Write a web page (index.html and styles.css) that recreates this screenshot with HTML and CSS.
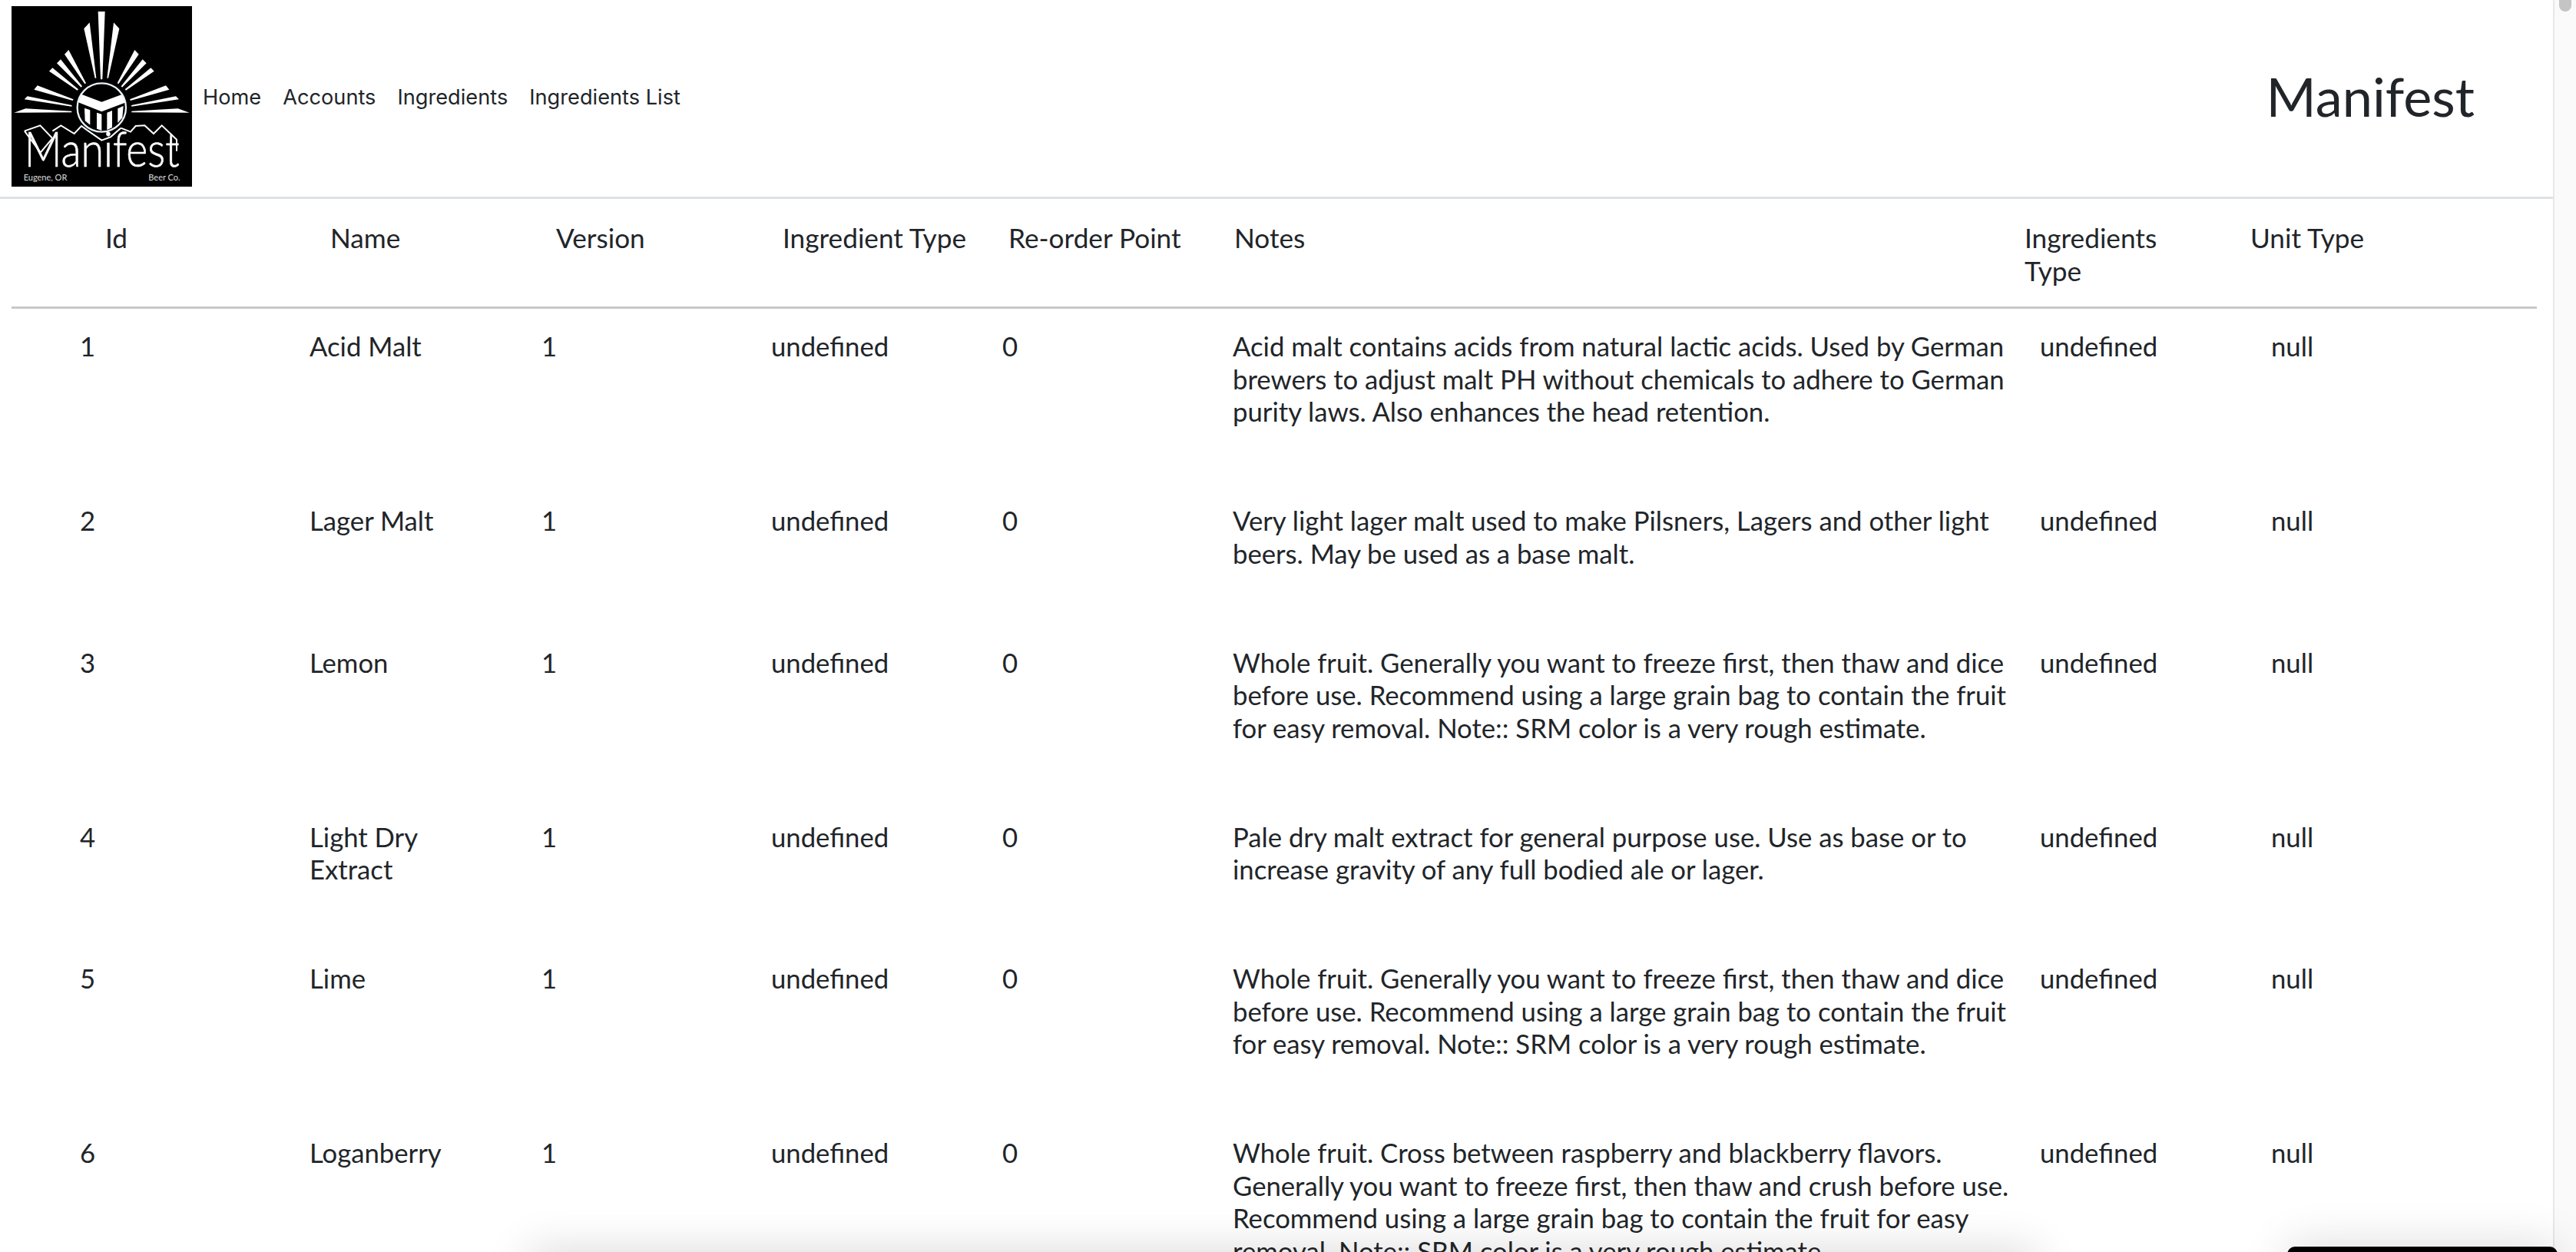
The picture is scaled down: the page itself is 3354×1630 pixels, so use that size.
FILE: index.html
```html
<!DOCTYPE html>
<html lang="en">
  <head>
    <meta charset="UTF-8" />
    <title>Manifest</title>
    <link rel="stylesheet" href="styles.css">
  </head>
  <body>
    <header class="topbar">
      <svg class="logo" viewBox="45 24 705 705" role="img" aria-label="Manifest Beer Co. logo">
        <rect x="45" y="24" width="705" height="705" fill="#000" />
        <g fill="#fff">
          <!-- rays -->
          <polygon points="383,45 410,45 400,310 393,310" />
          <polygon points="328,112 350,88 376,305 371,305" />
          <polygon points="466,112 444,88 418,305 423,305" />
          <polygon points="252,212 268,195 336,325 331,328" />
          <polygon points="222,247 237,232 321,337 317,341" />
          <polygon points="192,278 205,265 306,349 302,353" />
          <polygon points="542,212 526,195 458,325 463,328" />
          <polygon points="572,247 557,232 473,337 477,341" />
          <polygon points="602,278 589,265 488,349 492,353" />
          <polygon points="133,350 146,334 287,388 284,393" />
          <polygon points="95,388 107,376 281,411 280,416" />
          <polygon points="55,440 100,424 280,434 280,439" />
          <polygon points="661,350 648,334 507,388 510,393" />
          <polygon points="699,388 687,376 513,411 514,416" />
          <polygon points="740,440 695,424 514,434 514,439" />
          <!-- face -->
          <polygon points="318,368 397,398 478,368 492,400 397,436 306,400" />
          <polygon points="330,422 352,430 352,488 332,472" />
          <polygon points="378,440 397,446 397,510 378,503" />
          <polygon points="418,440 438,432 438,498 418,508" />
          <polygon points="460,424 482,414 478,460 460,480" />
        </g>
        <circle class="logo-ring" cx="397" cy="420" r="95" />
        <polyline class="logo-line" points="340,508 397,548 432,535 472,500" />
        <polyline class="logo-line" points="95,512 157,490 205,540 158,596 96,512" />
        <polyline class="logo-line" points="205,512 238,490 290,522 318,492 340,508" />
        <polyline class="logo-line" points="472,500 510,515 530,492 565,490 600,522 632,490 690,545 690,590" />
        <text class="logo-word" transform="translate(95 652) scale(0.84 1)">Manifest</text>
        <text class="logo-small" x="92" y="706">Eugene, OR</text>
        <text class="logo-small" x="580" y="706">Beer Co.</text>
      </svg>
      <nav class="nav">
        <a href="#">Home</a>
        <a href="#">Accounts</a>
        <a href="#">Ingredients</a>
        <a href="#">Ingredients List</a>
      </nav>
      <h1 class="title">Manifest</h1>
    </header>

    <main class="list">
      <div class="list-head">
        <div>Id</div>
        <div>Name</div>
        <div>Version</div>
        <div>Ingredient Type</div>
        <div>Re-order Point</div>
        <div>Notes</div>
        <div class="narrow">Ingredients Type</div>
        <div>Unit Type</div>
      </div>

      <div class="list-row">
        <div>1</div>
        <div class="narrow">Acid Malt</div>
        <div>1</div>
        <div>undefined</div>
        <div>0</div>
        <div class="notes">Acid malt contains acids from natural lactic acids. Used by German brewers to adjust malt PH without chemicals to adhere to German purity laws. Also enhances the head retention.</div>
        <div>undefined</div>
        <div>null</div>
      </div>
      <div class="list-row">
        <div>2</div>
        <div class="narrow">Lager Malt</div>
        <div>1</div>
        <div>undefined</div>
        <div>0</div>
        <div class="notes">Very light lager malt used to make Pilsners, Lagers and other light beers. May be used as a base malt.</div>
        <div>undefined</div>
        <div>null</div>
      </div>
      <div class="list-row">
        <div>3</div>
        <div class="narrow">Lemon</div>
        <div>1</div>
        <div>undefined</div>
        <div>0</div>
        <div class="notes">Whole fruit. Generally you want to freeze first, then thaw and dice before use. Recommend using a large grain bag to contain the fruit for easy removal. Note:: SRM color is a very rough estimate.</div>
        <div>undefined</div>
        <div>null</div>
      </div>
      <div class="list-row">
        <div>4</div>
        <div class="narrow">Light Dry Extract</div>
        <div>1</div>
        <div>undefined</div>
        <div>0</div>
        <div class="notes">Pale dry malt extract for general purpose use. Use as base or to increase gravity of any full bodied ale or lager.</div>
        <div>undefined</div>
        <div>null</div>
      </div>
      <div class="list-row">
        <div>5</div>
        <div class="narrow">Lime</div>
        <div>1</div>
        <div>undefined</div>
        <div>0</div>
        <div class="notes">Whole fruit. Generally you want to freeze first, then thaw and dice before use. Recommend using a large grain bag to contain the fruit for easy removal. Note:: SRM color is a very rough estimate.</div>
        <div>undefined</div>
        <div>null</div>
      </div>
      <div class="list-row">
        <div>6</div>
        <div class="narrow">Loganberry</div>
        <div>1</div>
        <div>undefined</div>
        <div>0</div>
        <div class="notes">Whole fruit. Cross between raspberry and blackberry flavors. Generally you want to freeze first, then thaw and crush before use. Recommend using a large grain bag to contain the fruit for easy removal. Note:: SRM color is a very rough estimate.</div>
        <div>undefined</div>
        <div>null</div>
      </div>
    </main>

    <!-- things floating over the page -->
    <div class="scrollbar"><div class="scrollbar-thumb"></div></div>
    <div class="float-wide"></div>
    <div class="float-black"></div>
  </body>
</html>
```

FILE: styles.css
```css
html,
body {
  height: 100%;
  overflow: hidden;
}

body {
  margin: 0;
  background-color: #fff;
  color: #212529;
  font-family: Lato, "Open Sans", sans-serif;
  font-size: 34.7px;
  line-height: 42.5px;
}

.topbar {
  display: flex;
  align-items: center;
  width: 3324px;
  height: 259px;
  box-sizing: border-box;
  padding: 0 102px 0 15px;
  border-bottom: 3px solid #dee2e6;
}

.logo {
  display: block;
  width: 235px;
  height: 235px;
  flex-shrink: 0;
  margin-bottom: 5px;
}

.logo-ring {
  fill: none;
  stroke: #e8f3f8;
  stroke-width: 7;
}

.logo-line {
  fill: none;
  stroke: #fff;
  stroke-width: 6;
}

.logo-word {
  fill: #fff;
  stroke: #fff;
  stroke-width: 2;
  font-family: Lato, sans-serif;
  font-size: 192px;
  font-weight: 300;
}

.logo-small {
  fill: #ddd;
  font-family: Lato, sans-serif;
  font-size: 33px;
}

.nav {
  display: flex;
  gap: 28px;
  margin-left: 14px;
  margin-bottom: 2px;
  font-family: Inter, sans-serif;
  font-size: 27.2px;
}

.nav a {
  color: #212529;
  text-decoration: none;
}

.title {
  margin: 0 0 6px auto;
  font-size: 70.3px;
  font-weight: 400;
  line-height: 1.2;
}

.list {
  width: 3288px;
  margin-left: 15px;
}

.list-head {
  display: grid;
  grid-template-columns: 293px 294px 295px 294px 294px 1029px 294px 1fr;
  padding: 29px 0 26px 122px;
  border-bottom: 3px solid #c8c8c8;
  font-size: 35.2px;
}

.list-row {
  display: grid;
  grid-template-columns: 299px 302px 299px 301px 300px 1051px 301px 1fr;
  padding: 28px 0 71.5px 89px;
}

.narrow {
  padding-right: 60px;
}

.notes {
  padding-right: 28px;
}

.scrollbar {
  position: fixed;
  top: 0;
  right: 0;
  bottom: 0;
  width: 28px;
  background-color: #fafafa;
  border-left: 2px solid #e8e8e8;
}

.scrollbar-thumb {
  width: 16px;
  height: 15px;
  margin-left: 6px;
  background-color: #c4c4c4;
  border-radius: 0 0 8px 8px;
}

.float-wide {
  position: fixed;
  left: 690px;
  bottom: -60px;
  width: 1960px;
  height: 60px;
  box-shadow: 0 0 60px rgba(0, 0, 0, 0.16);
}

.float-black {
  position: fixed;
  left: 2978px;
  bottom: -40px;
  width: 352px;
  height: 47px;
  background-color: #000;
  border-radius: 10px 10px 0 0;
  box-shadow: 0 0 60px rgba(0, 0, 0, 0.16);
}
```
